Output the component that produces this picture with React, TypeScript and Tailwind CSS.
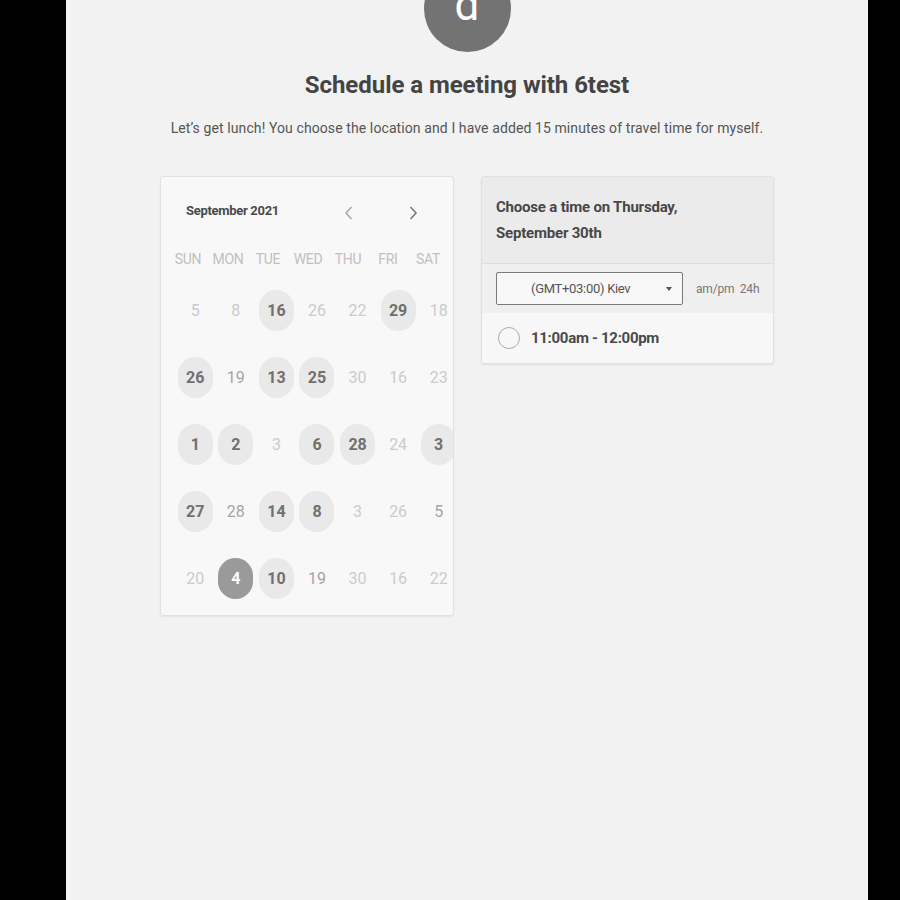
import React from "react";

type Tone = "l" | "m" | "h" | "s";

const rows: [string, Tone][][] = [
  [["5", "l"], ["8", "l"], ["16", "h"], ["26", "l"], ["22", "l"], ["29", "h"], ["18", "l"]],
  [["26", "h"], ["19", "m"], ["13", "h"], ["25", "h"], ["30", "l"], ["16", "l"], ["23", "l"]],
  [["1", "h"], ["2", "h"], ["3", "l"], ["6", "h"], ["28", "h"], ["24", "l"], ["3", "h"]],
  [["27", "h"], ["28", "m"], ["14", "h"], ["8", "h"], ["3", "l"], ["26", "l"], ["5", "m"]],
  [["20", "l"], ["4", "s"], ["10", "h"], ["19", "m"], ["30", "l"], ["16", "l"], ["22", "l"]],
];

const days = ["SUN", "MON", "TUE", "WED", "THU", "FRI", "SAT"];

function DayCell({ label, tone }: { label: string; tone: Tone }) {
  if (tone === "h") {
    return (
      <div className="flex justify-center">
        <div className="w-[35px] h-[41px] rounded-full bg-[#e9e9e9] flex items-center justify-center text-[16px] font-bold text-[#707070]">
          {label}
        </div>
      </div>
    );
  }
  if (tone === "s") {
    return (
      <div className="flex justify-center">
        <div className="w-[35px] h-[41px] rounded-full bg-[#9a9a9a] flex items-center justify-center text-[16px] font-bold text-white">
          {label}
        </div>
      </div>
    );
  }
  return (
    <div className="flex justify-center">
      <div
        className={
          "w-[35px] h-[41px] flex items-center justify-center text-[16px] " +
          (tone === "m" ? "text-[#a4a4a4]" : "text-[#cbcbcb]")
        }
      >
        {label}
      </div>
    </div>
  );
}

function Calendar() {
  return (
    <div className="w-[294px] h-[440px] bg-[#f8f8f8] border border-[#e2e2e2] rounded-[3px] overflow-hidden shadow-[0_1px_2px_rgba(0,0,0,0.06)]">
      {/* Month header */}
      <div className="flex items-center h-[72px] pl-[25px]">
        <span className="text-[13px] font-bold text-[#4a4a4a] tracking-[-0.3px] w-[158px] -mt-[4px]">
          September 2021
        </span>
        <svg width="10" height="16" viewBox="0 0 10 16">
          <path d="M7.5 2 L2 8 L7.5 14" fill="none" stroke="#a8a8a8" strokeWidth="1.6" />
        </svg>
        <svg width="10" height="16" viewBox="0 0 10 16" className="ml-[54px]">
          <path d="M2.5 2 L8 8 L2.5 14" fill="none" stroke="#7a7a7a" strokeWidth="1.6" />
        </svg>
      </div>

      {/* Weekday names */}
      <div className="grid grid-cols-7 w-[280px] ml-[7px] text-[14px] text-[#c0c0c0] tracking-[-0.3px]">
        {days.map((d) => (
          <div key={d} className="text-center">
            {d}
          </div>
        ))}
      </div>

      {/* Day grid */}
      <div className="w-[284px] ml-[14px] mt-[7px]">
        {rows.map((row, i) => (
          <div key={i} className="grid grid-cols-7 h-[67px] items-center w-[284px]">
            {row.map(([label, tone], j) => (
              <DayCell key={j} label={label} tone={tone} />
            ))}
          </div>
        ))}
      </div>
    </div>
  );
}

function TimePanel() {
  return (
    <div className="w-[293px] border border-[#e0e0e0] rounded-[3px] overflow-hidden shadow-[0_1px_2px_rgba(0,0,0,0.08)]">
      <div className="bg-[#ebebeb] px-[14px] pt-[17px] pb-[17px] border-b border-[#dedede]">
        <p className="text-[15px] font-bold text-[#474747] leading-[26px] tracking-[-0.2px]">
          Choose a time on Thursday,
          <br />
          September 30th
        </p>
      </div>
      <div className="bg-[#efefef] flex items-center h-[49px] pl-[14px]">
        <div className="w-[187px] h-[33px] border border-[#7a7a7a] rounded-[2px] bg-[#f8f8f8] flex items-center pl-[34px] pr-[10px]">
          <span className="text-[13px] text-[#555] tracking-[-0.3px] flex-1">(GMT+03:00) Kiev</span>
          <span className="w-0 h-0 border-l-[3px] border-r-[3px] border-t-[4px] border-l-transparent border-r-transparent border-t-[#555]" />
        </div>
        <span className="ml-[13px] text-[12px] text-[#777] tracking-[-0.2px]">am/pm&nbsp;&nbsp;24h</span>
      </div>
      <div className="bg-[#f7f7f7] flex items-center h-[50px] pl-[16px]">
        <div className="w-[22px] h-[22px] rounded-full border-[1.5px] border-[#aaa]" />
        <span className="ml-[11px] text-[15px] font-bold text-[#4a4a4a] tracking-[-0.3px]">
          11:00am - 12:00pm
        </span>
      </div>
    </div>
  );
}

export default function App() {
  return (
    <div className="w-full h-[900px] bg-black flex overflow-hidden font-['Roboto',sans-serif]">
      <main className="ml-[66px] w-[802px] h-full bg-[#f2f2f2] flex flex-col items-center">
        {/* Avatar */}
        <div className="w-[87px] h-[87px] -mt-[35px] rounded-full bg-[#737373] flex justify-center">
          <span className="text-[44px] leading-none text-white mt-[18px]">d</span>
        </div>

        <h1 className="mt-[18px] text-[24px] font-bold text-[#444] tracking-[-0.05px] leading-[30px]">
          Schedule a meeting with 6test
        </h1>
        <p className="mt-[19px] text-[14px] text-[#555] tracking-[0.1px] leading-[18px]">
          Let’s get lunch! You choose the location and I have added 15 minutes of travel time for myself.
        </p>

        <div className="mt-[39px] flex items-start gap-[27px]">
          <Calendar />
          <TimePanel />
        </div>
      </main>
    </div>
  );
}
